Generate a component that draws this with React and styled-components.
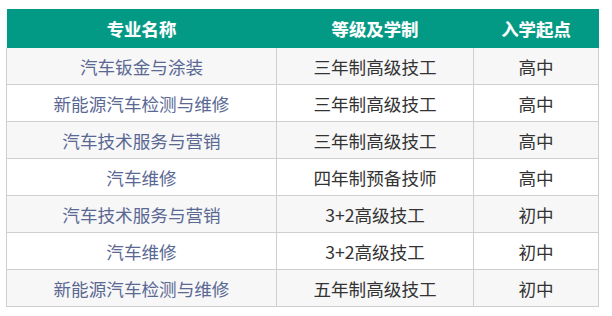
import React from "react";
import styled, { createGlobalStyle } from "styled-components";

const Global = createGlobalStyle`
  html, body { margin: 0; padding: 0; background: #fff; }
  body { font-family: "Noto Sans CJK SC", "Noto Sans", sans-serif; }
`;

const Page = styled.div`
  padding: 9px 0 0 6px;
  width: 612px;
  height: 316px;
  box-sizing: border-box;
`;

const Table = styled.table`
  border-collapse: collapse;
  table-layout: fixed;
  width: 592px;
`;

const HeadCell = styled.th`
  background: #039a85;
  color: #fff;
  font-weight: 700;
  font-size: 17.4px;
  height: 39px;
  padding: 0;
  text-align: center;
  border: none;
  text-shadow: 0 0 1px rgba(255,255,255,0.4);
`;

const Row = styled.tr`
  background: ${(p) => (p.$alt ? "#f7f7f7" : "#ffffff")};
`;

const Cell = styled.td`
  height: 36px;
  padding: 0;
  text-align: center;
  font-size: 17.6px;
  color: ${(p) => (p.$accent ? "#5a6894" : "#333333")};
  border: 1px solid #cfcfcf;
  border-top: none;
`;

const rows = [
  ["汽车钣金与涂装", "三年制高级技工", "高中"],
  ["新能源汽车检测与维修", "三年制高级技工", "高中"],
  ["汽车技术服务与营销", "三年制高级技工", "高中"],
  ["汽车维修", "四年制预备技师", "高中"],
  ["汽车技术服务与营销", "3+2高级技工", "初中"],
  ["汽车维修", "3+2高级技工", "初中"],
  ["新能源汽车检测与维修", "五年制高级技工", "初中"],
];

export default function App() {
  return (
    <Page>
      <Global />
      <Table>
        <colgroup>
          <col style={{ width: 270 }} />
          <col style={{ width: 197 }} />
          <col style={{ width: 125 }} />
        </colgroup>
        <thead>
          <tr>
            <HeadCell>专业名称</HeadCell>
            <HeadCell>等级及学制</HeadCell>
            <HeadCell>入学起点</HeadCell>
          </tr>
        </thead>
        <tbody>
          {rows.map((r, i) => (
            <Row key={i} $alt={i % 2 === 0}>
              <Cell $accent>{r[0]}</Cell>
              <Cell>{r[1]}</Cell>
              <Cell>{r[2]}</Cell>
            </Row>
          ))}
        </tbody>
      </Table>
    </Page>
  );
}
